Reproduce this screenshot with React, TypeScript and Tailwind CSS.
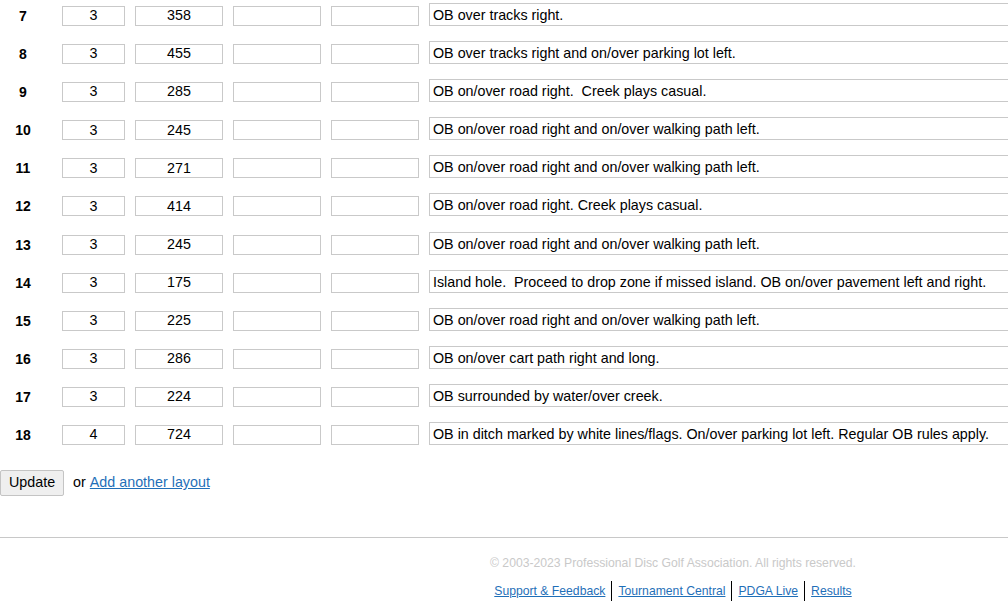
import React from "react";

interface Hole {
  num: number;
  par: string;
  length: string;
  notes: string;
}

const holes: Hole[] = [
  { num: 7, par: "3", length: "358", notes: "OB over tracks right." },
  { num: 8, par: "3", length: "455", notes: "OB over tracks right and on/over parking lot left." },
  { num: 9, par: "3", length: "285", notes: "OB on/over road right.  Creek plays casual." },
  { num: 10, par: "3", length: "245", notes: "OB on/over road right and on/over walking path left." },
  { num: 11, par: "3", length: "271", notes: "OB on/over road right and on/over walking path left." },
  { num: 12, par: "3", length: "414", notes: "OB on/over road right. Creek plays casual." },
  { num: 13, par: "3", length: "245", notes: "OB on/over road right and on/over walking path left." },
  { num: 14, par: "3", length: "175", notes: "Island hole.  Proceed to drop zone if missed island. OB on/over pavement left and right." },
  { num: 15, par: "3", length: "225", notes: "OB on/over road right and on/over walking path left." },
  { num: 16, par: "3", length: "286", notes: "OB on/over cart path right and long." },
  { num: 17, par: "3", length: "224", notes: "OB surrounded by water/over creek." },
  { num: 18, par: "4", length: "724", notes: "OB in ditch marked by white lines/flags. On/over parking lot left. Regular OB rules apply." },
];

const inputCls =
  "shrink-0 h-[20px] border border-[#c9c9c9] bg-white text-center text-[14.3px] text-black outline-none";

const HoleRow: React.FC<{ hole: Hole }> = ({ hole }) => (
  <div className="flex h-[23px] items-end mb-[15.1px]">
    <div className="shrink-0 w-[46px] h-[20px] leading-[20px] text-center font-bold text-[14px] text-black">
      {hole.num}
    </div>
    <input className={`${inputCls} ml-[16px] w-[63px]`} defaultValue={hole.par} />
    <input className={`${inputCls} ml-[10px] w-[88px]`} defaultValue={hole.length} />
    <input className={`${inputCls} ml-[10px] w-[88px]`} defaultValue="" />
    <input className={`${inputCls} ml-[10px] w-[88px]`} defaultValue="" />
    <textarea
      className="ml-[10px] w-[700px] h-[23px] shrink-0 resize-none overflow-hidden border border-[#c9c9c9] bg-white px-[3px] pt-[3px] pb-[1px] text-[14.3px] leading-[17px] text-black outline-none"
      defaultValue={hole.notes}
    />
  </div>
);

export default function App() {
  return (
    <div className="w-[1008px] h-[603px] overflow-hidden bg-white font-['Liberation_Sans',Arial,sans-serif]">
      <div className="pt-[3px]">
        {holes.map((h) => (
          <HoleRow key={h.num} hole={h} />
        ))}
      </div>

      <div className="mt-[25px] flex items-center text-[14.3px] text-black">
        <button className="h-[26px] px-[8px] border border-[#c4c4c4] rounded-[2px] bg-[#efefef] text-[14.3px] text-black">
          Update
        </button>
        <span className="ml-[9px]">or</span>
        <a href="#" className="ml-[4px] text-[#1f6fb8] underline">
          Add another layout
        </a>
      </div>

      <div className="mt-[41px] border-t border-[#c8c8c8]" />

      <div className="ml-[338px] pt-[16px] text-center text-[12.2px]">
        <div className="text-[#c9c9c9]">© 2003-2023 Professional Disc Golf Association. All rights reserved.</div>
        <div className="mt-[9px] flex justify-center items-center">
          <a href="#" className="px-[6px] text-[#1f6fb8] underline leading-[20px]">Support &amp; Feedback</a>
          <span className="border-l border-black h-[20px]" />
          <a href="#" className="px-[6px] text-[#1f6fb8] underline leading-[20px]">Tournament Central</a>
          <span className="border-l border-black h-[20px]" />
          <a href="#" className="px-[6px] text-[#1f6fb8] underline leading-[20px]">PDGA Live</a>
          <span className="border-l border-black h-[20px]" />
          <a href="#" className="px-[6px] text-[#1f6fb8] underline leading-[20px]">Results</a>
        </div>
      </div>
    </div>
  );
}
